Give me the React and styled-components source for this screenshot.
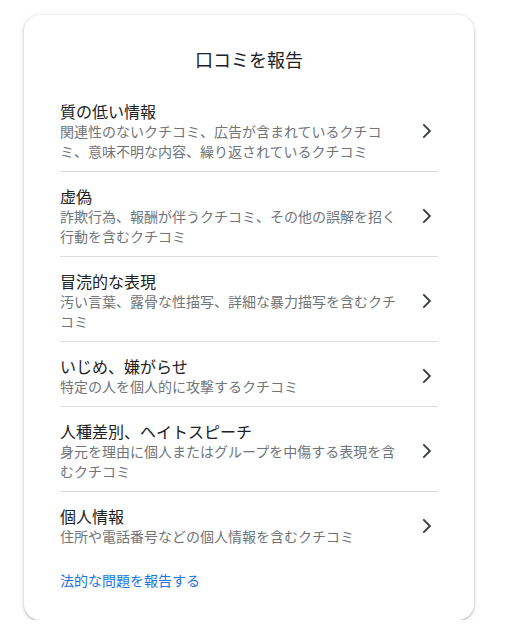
import React from "react";
import styled, { createGlobalStyle } from "styled-components";

const GlobalStyle = createGlobalStyle`
  html, body {
    margin: 0;
    padding: 0;
    background: #ffffff;
  }
  body {
    font-family: "Noto Sans CJK JP", "Noto Sans", "Liberation Sans", sans-serif;
  }
`;

const Page = styled.div`
  padding: 15px 0 0 24px;
`;

const Card = styled.div`
  width: 450px;
  box-sizing: border-box;
  background: #fff;
  border-radius: 16px;
  box-shadow: 0 1px 2px 0 rgba(60, 64, 67, 0.3), 0 1px 4px 1px rgba(60, 64, 67, 0.12);
  padding: 32px 36px 30px;
  display: flex;
  flex-direction: column;
`;

const Heading = styled.h1`
  margin: 0 0 15px;
  font-size: 18px;
  line-height: 24px;
  font-weight: 400;
  color: #202124;
  text-align: center;
`;

const List = styled.div`
  display: flex;
  flex-direction: column;
`;

const Item = styled.button`
  all: unset;
  box-sizing: border-box;
  display: flex;
  align-items: center;
  gap: 16px;
  padding: 15px 0 10px;
  cursor: pointer;
  & + & {
    border-top: 1px solid #dadce0;
    padding-top: 14px;
  }
`;

const Texts = styled.div`
  flex: 1;
  min-width: 0;
  display: flex;
  flex-direction: column;
`;

const Title = styled.div`
  font-size: 16px;
  line-height: 20px;
  color: #202124;
`;

const Desc = styled.div`
  font-size: 14px;
  line-height: 20px;
  color: #70757a;
`;

const Chevron = styled.svg`
  flex: none;
  width: 24px;
  height: 24px;
  fill: none;
  stroke: #3c4043;
  stroke-width: 1.9;
`;

const LegalLink = styled.a`
  margin-top: 14px;
  font-size: 14px;
  line-height: 20px;
  color: #1a73e8;
  text-decoration: none;
  cursor: pointer;
`;

const items = [
  {
    title: "質の低い情報",
    desc: "関連性のないクチコミ、広告が含まれているクチコミ、意味不明な内容、繰り返されているクチコミ",
  },
  {
    title: "虚偽",
    desc: "詐欺行為、報酬が伴うクチコミ、その他の誤解を招く行動を含むクチコミ",
  },
  {
    title: "冒涜的な表現",
    desc: "汚い言葉、露骨な性描写、詳細な暴力描写を含むクチコミ",
  },
  {
    title: "いじめ、嫌がらせ",
    desc: "特定の人を個人的に攻撃するクチコミ",
  },
  {
    title: "人種差別、ヘイトスピーチ",
    desc: "身元を理由に個人またはグループを中傷する表現を含むクチコミ",
  },
  {
    title: "個人情報",
    desc: "住所や電話番号などの個人情報を含むクチコミ",
  },
];

export default function App() {
  return (
    <>
      <GlobalStyle />
      <Page>
        <Card>
          <Heading>口コミを報告</Heading>
          <List>
            {items.map((it) => (
              <Item key={it.title}>
                <Texts>
                  <Title>{it.title}</Title>
                  <Desc>{it.desc}</Desc>
                </Texts>
                <Chevron viewBox="0 0 24 24" aria-hidden="true">
                  <path d="M9.3 5.4 L15.9 12 L9.3 18.6" />
                </Chevron>
              </Item>
            ))}
          </List>
          <LegalLink>法的な問題を報告する</LegalLink>
        </Card>
      </Page>
    </>
  );
}
